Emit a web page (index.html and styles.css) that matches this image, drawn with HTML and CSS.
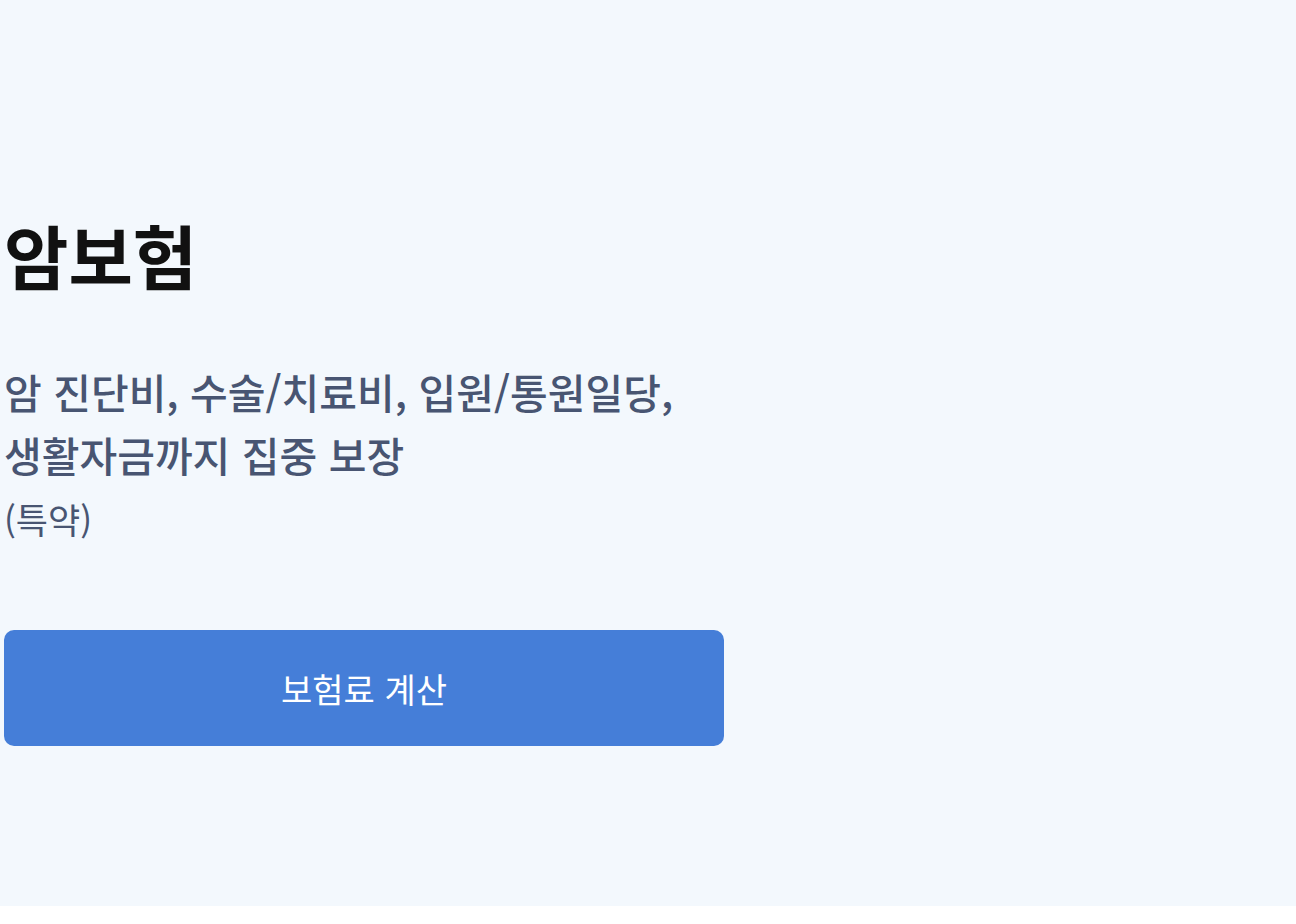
FILE: index.html
```html
<!DOCTYPE html>
<html lang="ko">

<head>
  <meta charset="UTF-8">
  <meta name="viewport" content="width=device-width, initial-scale=1.0">
  <title>암보험</title>
  <link rel="stylesheet" href="styles.css">
</head>

<body>
  <section class="hero">
    <h1 class="hero-title">암보험</h1>
    <p class="hero-desc">암 진단비, 수술/치료비, 입원/통원일당,<br>생활자금까지 집중 보장</p>
    <p class="hero-note">(특약)</p>
    <button type="button" class="hero-btn">보험료 계산</button>
  </section>
</body>

</html>
```

FILE: styles.css
```css
:root {
  font-family: 'Noto Sans CJK KR', 'Noto Sans', sans-serif;
}

body {
  background-color: #fff;
  margin: 0;
  padding: 0;
}

.hero {
  height: 906px;
  box-sizing: border-box;
  background-color: #f3f8fd;
  padding: 210px 0 0 4px;
  display: flex;
  flex-direction: column;
  align-items: flex-start;
}

.hero-title {
  margin: 0;
  font-size: 70px;
  line-height: 90px;
  font-weight: 700;
  color: #111;
}

.hero-desc {
  margin: 60px 0 0;
  font-size: 41px;
  line-height: 63px;
  font-weight: 500;
  color: #485572;
}

.hero-note {
  margin: 8px 0 0;
  font-size: 35px;
  line-height: 50px;
  font-weight: 400;
  color: #485572;
}

.hero-btn {
  margin-top: 86px;
  width: 720px;
  height: 116px;
  border: none;
  border-radius: 10px;
  background-color: #457ed8;
  color: #fff;
  font-family: inherit;
  font-size: 34px;
  font-weight: 400;
}
```
